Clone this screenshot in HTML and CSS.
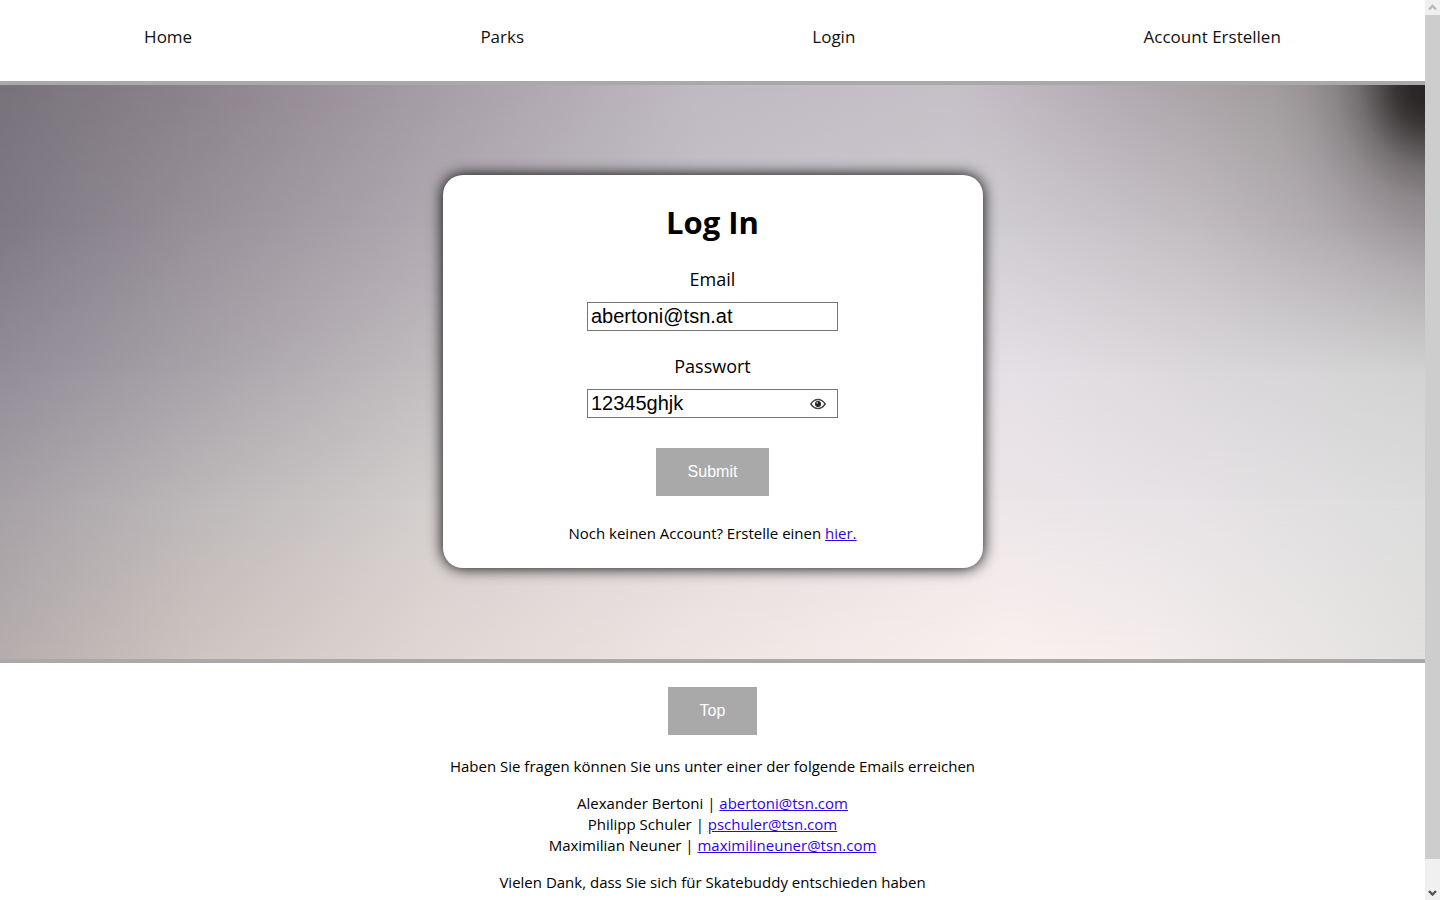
FILE: index.html
```html
<!DOCTYPE html>
<html lang="de">
<head>
<meta charset="utf-8">
<meta name="viewport" content="width=device-width, initial-scale=1">
<title>Skatebuddy – Log In</title>
<link rel="stylesheet" href="styles.css">
</head>
<body>
<div class="page" id="top">
  <header class="header">
    <nav class="nav">
      <a class="nav-link" href="#home">Home</a>
      <a class="nav-link" href="#parks">Parks</a>
      <a class="nav-link" href="#login">Login</a>
      <a class="nav-link" href="#account">Account Erstellen</a>
    </nav>
  </header>

  <main class="hero">
    <div class="backdrop" aria-hidden="true">
      <div class="tone tone-e"></div>
      <div class="tone tone-d"></div>
      <div class="tone tone-c"></div>
      <div class="tone tone-b"></div>
      <div class="tone tone-a"></div>
      <div class="tone tone-corner"></div>
    </div>
    <form class="card">
      <h1 class="title">Log In</h1>
      <label class="label" for="email">Email</label>
      <input class="input" id="email" type="text" value="abertoni@tsn.at">
      <label class="label" for="password">Passwort</label>
      <div class="password">
        <input class="input" id="password" type="text" value="12345ghjk">
        <button class="reveal" type="button" aria-label="Passwort anzeigen">
          <svg width="16" height="12" viewBox="0 0 16 12">
            <path d="M.8 6C3 2.7 5.300 1.500 8 1.500S13 2.700 15.200 6C13 9.300 10.700 10.500 8 10.500S3 9.300.8 6Z" fill="#fff" stroke="#444" stroke-width="1.400"/>
            <circle cx="8" cy="6" r="3" fill="#222"/>
            <circle cx="7.200" cy="4.800" r=".9" fill="#bbb"/>
          </svg>
        </button>
      </div>
      <button class="button submit" type="button">Submit</button>
      <p class="hint">Noch keinen Account? Erstelle einen <a class="link" href="#account">hier.</a></p>
    </form>
  </main>

  <footer class="footer">
    <button class="button" type="button">Top</button>
    <p class="text">Haben Sie fragen können Sie uns unter einer der folgende Emails erreichen</p>
    <p class="text">
      Alexander Bertoni | <a class="link" href="mailto:abertoni@tsn.com">abertoni@tsn.com</a><br>
      Philipp Schuler | <a class="link" href="mailto:pschuler@tsn.com">pschuler@tsn.com</a><br>
      Maximilian Neuner | <a class="link" href="mailto:maximilineuner@tsn.com">maximilineuner@tsn.com</a>
    </p>
    <p class="text">Vielen Dank, dass Sie sich für Skatebuddy entschieden haben</p>
  </footer>
</div>

<div class="scrollbar" aria-hidden="true">
  <svg class="arrow" width="15" height="15" viewBox="0 0 15 15"><path d="M4 9.500 7.500 6 11 9.500" fill="none" stroke="#b8b8b8" stroke-width="2.400"/></svg>
  <div class="track"><div class="thumb"></div></div>
  <svg class="arrow" width="15" height="15" viewBox="0 0 15 15"><path d="M4 6 7.500 9.500 11 6" fill="none" stroke="#555" stroke-width="2.400"/></svg>
</div>
</body>
</html>
```
FILE: styles.css
```css
* { box-sizing: border-box; }

body {
  margin: 0;
  padding-right: 15px;
  background: #fff;
  color: #000;
  font-family: "Segoe UI", "Open Sans", "Noto Sans", sans-serif;
  font-size: 15px;
  line-height: 21px;
}

.header {
  padding: 24px 0 31px;
  border-bottom: 4px solid #a9a9a9;
}

.nav {
  display: flex;
  justify-content: space-around;
}

.nav-link {
  color: #111;
  font-size: 17px;
  line-height: 26px;
  text-decoration: none;
}

.hero {
  position: relative;
  display: flex;
  justify-content: center;
  padding: 90px 20px 91px;
  border-bottom: 4px solid #a9a9a9;
}

/* Blurred backdrop: colour bands that fade into one another downwards */
.backdrop,
.tone {
  position: absolute;
  inset: 0;
}

.tone-a {
  background: linear-gradient(90deg, #77727a 0%, #8b838b 14%, #a69ea6 31%, #bfb9c1 49%, #c5bfc6 67%, #b1aab1 79%, #a39e9f 88%, #989395 94%, #8a8587 100%);
  mask-image: linear-gradient(#000 0%, transparent 25%);
}

.tone-b {
  background: linear-gradient(90deg, #7e7983 0%, #989199 14%, #b1abb2 31%, #c5c2c7 49%, #d0cdd2 70%, #c2bdc1 84%, #aea9ad 94%, #a09a9e 100%);
  mask-image: linear-gradient(#000 25%, transparent 50%);
}

.tone-c {
  background: linear-gradient(90deg, #928d97 0%, #a8a3a9 14%, #c3bfc1 31%, #d6d3d6 49%, #e5e0e5 71%, #dbd8db 84%, #d2d2d2 100%);
  mask-image: linear-gradient(#000 50%, transparent 72%);
}

.tone-d {
  background: linear-gradient(90deg, #a5a0a5 0%, #bcb8b9 14%, #d2cecd 30%, #e0dadb 49%, #ece6e9 70%, #e6e2e5 84%, #dcdcdc 100%);
  mask-image: linear-gradient(#000 72%, transparent 100%);
}

.tone-e {
  background: linear-gradient(90deg, #b5aeae 0%, #cfc5c1 14%, #e1d8d5 31%, #efe6e4 49%, #faf1ef 71%, #f4eeed 81%, #e2e1df 100%);
}

.tone-corner {
  background: radial-gradient(ellipse 150px 190px at 100% 0, rgba(40, 36, 35, 1) 0%, rgba(40, 36, 35, 0.96) 10%, rgba(40, 36, 35, 0.83) 20%, rgba(40, 36, 35, 0.57) 32%, rgba(40, 36, 35, 0.32) 44%, rgba(40, 36, 35, 0.14) 60%, rgba(40, 36, 35, 0.04) 80%, rgba(40, 36, 35, 0) 100%);
}

.card {
  position: relative;
  display: flex;
  flex-direction: column;
  align-items: center;
  width: 540px;
  max-width: 100%;
  padding: 26px 20px 24px;
  border-radius: 20px;
  background: #fff;
  box-shadow: 0 0 15px #000;
}

.title {
  margin: 0 0 22px;
  font-size: 31px;
  line-height: 43px;
}

.label {
  margin-bottom: 10px;
  font-size: 18px;
  line-height: 26px;
}

.input {
  display: block;
  width: 251px;
  height: 29px;
  padding: 1px 3px;
  border: 1px solid #767676;
  border-radius: 0;
  background: #fff;
  color: #000;
  font-family: Arial, "Liberation Sans", sans-serif;
  font-size: 20px;
}

.card > .input { margin-bottom: 22px; }

.password { position: relative; }

.reveal {
  position: absolute;
  top: 9px;
  right: 12px;
  display: flex;
  padding: 0;
  border: 0;
  background: none;
}

.button {
  padding: 15px 32px;
  border: 0;
  background: #a9a9a9;
  color: #fff;
  font-family: Arial, "Liberation Sans", sans-serif;
  font-size: 16px;
  line-height: 18px;
}

.submit { margin-top: 30px; }

.hint { margin: 27px 0 0; }

.link { color: #3300ee; }

.footer {
  padding-top: 24px;
  text-align: center;
}

.text { margin: 16px 0 0; }

.button + .text { margin-top: 21px; }

.scrollbar {
  position: fixed;
  top: 0;
  right: 0;
  bottom: 0;
  display: flex;
  flex-direction: column;
  width: 15px;
  background: #f0f0f0;
}

.arrow { display: block; }

.track { flex: 1; }

.thumb {
  height: 97%;
  background: #cdcdcd;
}
```
